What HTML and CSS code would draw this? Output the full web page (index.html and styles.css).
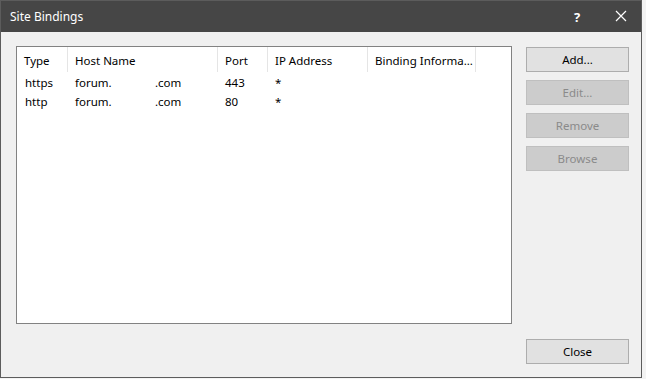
FILE: index.html
```html
<!DOCTYPE html>
<html>
<head>
<meta charset="utf-8">
<link rel="stylesheet" href="styles.css">
</head>
<body>
<div class="window">
  <div class="titlebar">
    <span class="title">Site Bindings</span>
    <span class="help">?</span>
    <svg class="close-x" width="12" height="12" viewBox="0 0 12 12"><path d="M1 1 L11 11 M11 1 L1 11" stroke="#fff" stroke-width="1.2" fill="none"/></svg>
  </div>
  <div class="content">
    <div class="list">
      <div class="row header">
        <div class="cell c1">Type</div>
        <div class="cell c2">Host Name</div>
        <div class="cell c3">Port</div>
        <div class="cell c4">IP Address</div>
        <div class="cell c5">Binding Informa...</div>
      </div>
      <div class="row item">
        <div class="cell c1">https</div>
        <div class="cell c2"><span class="host">forum.</span>.com</div>
        <div class="cell c3">443</div>
        <div class="cell c4">*</div>
        <div class="cell c5"></div>
      </div>
      <div class="row item">
        <div class="cell c1">http</div>
        <div class="cell c2"><span class="host">forum.</span>.com</div>
        <div class="cell c3">80</div>
        <div class="cell c4">*</div>
        <div class="cell c5"></div>
      </div>
    </div>
    <div class="actions">
      <button class="btn">Add...</button>
      <button class="btn disabled">Edit...</button>
      <button class="btn disabled">Remove</button>
      <button class="btn disabled">Browse</button>
      <button class="btn close">Close</button>
    </div>
  </div>
</div>
</body>
</html>
```
FILE: styles.css
```css
html, body {
  margin: 0;
  padding: 0;
  background: #f3f3f3;
}
body {
  font-family: "Noto Sans", "Open Sans", sans-serif;
  font-size: 11.5px;
  color: #000;
}
.window {
  width: 640px;
  height: 376px;
  border: 1px solid #5c5c5c;
  background: #f0f0f0;
  display: flex;
  flex-direction: column;
}
.titlebar {
  height: 31px;
  background: #464646;
  color: #fff;
  display: flex;
  align-items: center;
  position: relative;
  flex: none;
}
.title {
  margin-left: 9px;
  font-size: 12px;
  margin-top: -1px;
}
.help {
  position: absolute;
  left: 573px;
  top: 7px;
  font-size: 13px;
  font-weight: bold;
}
.close-x {
  position: absolute;
  left: 614px;
  top: 9px;
}
.content {
  flex: 1;
  display: flex;
  padding: 14px 12px 13px 15px;
  gap: 14px;
}
.list {
  width: 494px;
  height: 276px;
  border: 1px solid #828282;
  background: #fff;
  flex: none;
}
.row {
  display: flex;
}
.header {
  height: 25px;
}
.header .cell {
  border-right: 1px solid #e5e5e5;
  line-height: 20px;
  padding-top: 4px;
}
.item {
  height: 19px;
}
.item .cell {
  line-height: 18px;
  padding-top: 2px;
  border-right: 1px solid transparent;
}
.cell {
  padding-left: 7px;
  box-sizing: border-box;
  white-space: nowrap;
  overflow: hidden;
}
.c1 { width: 51px; }
.c2 { width: 150px; }
.c3 { width: 50px; }
.c4 { width: 100px; }
.c5 { width: 108px; }
.item .c1 { padding-left: 8px; }
.host {
  display: inline-block;
  width: 80px;
}
.actions {
  display: flex;
  flex-direction: column;
  gap: 8px;
  width: 103px;
  padding-top: 1px;
}
.btn {
  height: 25px;
  width: 103px;
  background: #e1e1e1;
  border: 1px solid #adadad;
  font-family: "Noto Sans", "Open Sans", sans-serif;
  font-size: 11.5px;
  color: #000;
  padding: 0;
  margin: 0;
}
.btn.disabled {
  background: #cccccc;
  border-color: #bfbfbf;
  color: #8a8a8a;
}
.btn.close {
  margin-top: auto;
}
```
